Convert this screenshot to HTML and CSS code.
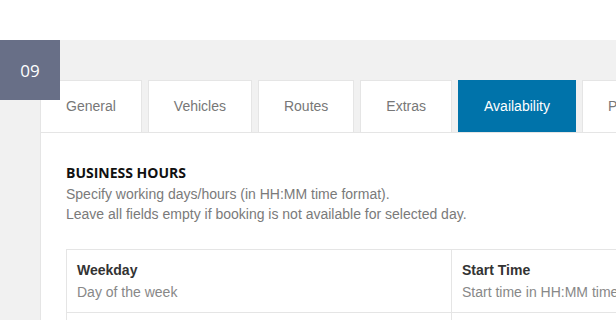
FILE: index.html
```html
<!DOCTYPE html>
<html lang="en">
<head>
  <meta charset="UTF-8">
  <title>Booking settings</title>
  <link rel="stylesheet" href="styles.css">
</head>
<body>
  <div class="wrap">
    <div class="step-badge">09</div>

    <ul class="tabs">
      <li>General</li>
      <li>Vehicles</li>
      <li>Routes</li>
      <li>Extras</li>
      <li class="active">Availability</li>
      <li>Payments</li>
      <li>Notifications</li>
    </ul>

    <div class="panel">
      <h3>BUSINESS HOURS</h3>
      <p class="desc">
        Specify working days/hours (in HH:MM time format).<br>
        Leave all fields empty if booking is not available for selected day.
      </p>

      <table class="hours">
        <thead>
          <tr>
            <th class="col-day">
              <strong>Weekday</strong>
              <span>Day of the week</span>
            </th>
            <th>
              <strong>Start Time</strong>
              <span>Start time in HH:MM time format</span>
            </th>
            <th>
              <strong>End Time</strong>
              <span>End time in HH:MM time format</span>
            </th>
          </tr>
        </thead>
        <tbody>
          <tr>
            <td>Monday</td>
            <td></td>
            <td></td>
          </tr>
        </tbody>
      </table>
    </div>
  </div>
</body>
</html>
```

FILE: styles.css
```css
html, body {
  margin: 0;
  height: 100%;
  overflow: hidden;
}

body {
  font-family: Arial, "Liberation Sans", sans-serif;
  font-size: 14px;
  background-color: #fff;
  color: #333;
}

.wrap {
  position: relative;
  margin-top: 40px;
  padding: 40px 0 0 40px;
  background-color: #f1f1f1;
  height: 100%;
  box-sizing: border-box;
  overflow: hidden;
}

.step-badge {
  position: absolute;
  left: 0;
  top: 0;
  width: 60px;
  height: 60px;
  display: flex;
  align-items: center;
  justify-content: center;
  background-color: #686f87;
  color: #fff;
  font-family: "Open Sans", sans-serif;
  font-size: 17px;
}

.tabs {
  display: flex;
  gap: 6px;
  margin: 0;
  padding: 0;
  list-style: none;
  white-space: nowrap;
}

.tabs li {
  box-sizing: border-box;
  height: 52px;
  line-height: 51px;
  padding: 0 25px;
  background-color: #fff;
  border: 1px solid #e5e5e5;
  border-bottom: none;
  color: #777;
  font-size: 14px;
  flex-shrink: 0;
}

.tabs li.active {
  background-color: #0073aa;
  border-color: #0073aa;
  color: #fff;
}

.panel {
  background-color: #fff;
  border-top: 1px solid #e5e5e5;
  border-left: 1px solid #e5e5e5;
  padding: 31px 0 0 25px;
  height: 100%;
}

.panel h3 {
  margin: 0;
  font-family: "Open Sans", sans-serif;
  font-size: 14px;
  font-weight: 700;
  line-height: 18px;
  color: #111;
}

.desc {
  margin: 2px 0 0;
  line-height: 20px;
  color: #7a7a7a;
}

.hours {
  margin-top: 25px;
  width: 1000px;
  border-collapse: collapse;
  background-color: #fff;
}

.hours th, .hours td {
  border: 1px solid #e5e5e5;
  padding: 10px;
  text-align: left;
  vertical-align: top;
  font-weight: normal;
}

.hours .col-day {
  width: 364px;
}

.hours th strong {
  display: block;
  line-height: 20px;
  color: #333;
}

.hours th span {
  display: block;
  margin-top: 2px;
  line-height: 20px;
  color: #888;
}
```
